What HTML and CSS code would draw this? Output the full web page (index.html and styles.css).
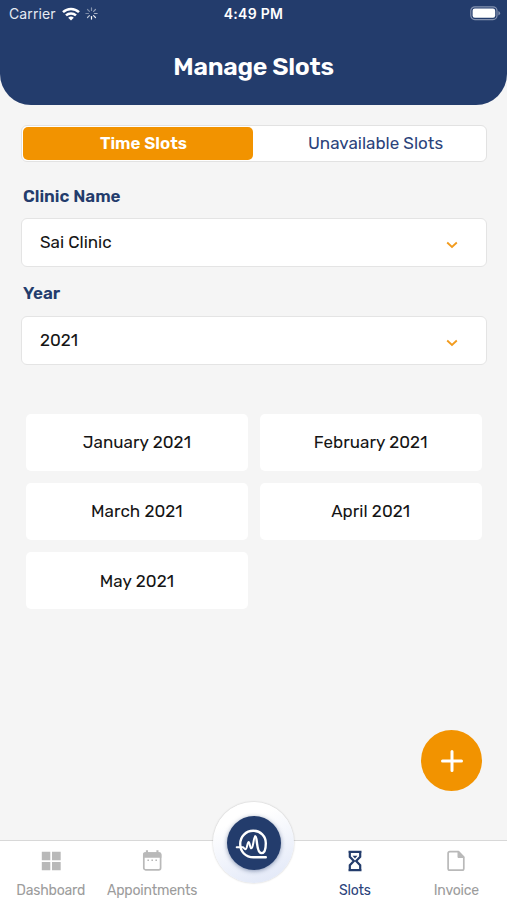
FILE: index.html
```html
<!DOCTYPE html>
<html lang="en">
	<head>
		<meta charset="utf-8">
		<meta name="viewport" content="width=device-width, initial-scale=1">
		<title>Manage Slots</title>
		<link rel="stylesheet" href="styles.css">
	</head>
	<body>
		<header class="header">
			<div class="status">
				<div class="status-left">
					<span class="carrier">Carrier</span>
					<svg class="wifi" width="18" height="14" viewBox="0 0 18 14" fill="none" stroke="#fff" stroke-width="2.5">
						<path d="M1 5.1a11.6 11.6 0 0 1 16 0"/>
						<path d="M4 8.4a7.3 7.3 0 0 1 10 0"/>
						<path d="M9 13.6 6.2 10.7a4.1 4.1 0 0 1 5.6 0z" fill="#fff" stroke="none"/>
					</svg>
					<svg class="spinner" width="13" height="13" viewBox="-6.5 -6.5 13 13" stroke="#fff" stroke-width="1.2" stroke-linecap="round">
						<path d="M0-3V-5.6" opacity=".45"/>
						<path d="M2.1-2.1 4-4" opacity=".5"/>
						<path d="M3 0H5.6" opacity=".6"/>
						<path d="M2.1 2.1 4 4" opacity=".9"/>
						<path d="M0 3V5.6"/>
						<path d="M-2.1 2.1-4 4" opacity=".7"/>
						<path d="M-3 0H-5.6" opacity=".4"/>
						<path d="M-2.1-2.1-4-4" opacity=".4"/>
					</svg>
				</div>
				<div class="clock">4:49 PM</div>
				<div class="status-right">
					<svg width="31" height="15" viewBox="0 0 31 15">
						<rect x=".8" y=".8" width="26.2" height="12.8" rx="4" fill="none" stroke="#8492b0" stroke-width="1.2"/>
						<rect x="2.6" y="2.6" width="22.6" height="9.2" rx="2.2" fill="#fff"/>
						<path d="M28.4 5v4.4q1.7-.7 1.7-2.2T28.4 5z" fill="#8492b0"/>
					</svg>
				</div>
			</div>
			<h1>Manage Slots</h1>
		</header>

		<main>
			<div class="switch">
				<div class="switch-item active"><span>Time Slots</span></div>
				<div class="switch-item"><span>Unavailable Slots</span></div>
			</div>

			<div class="label label-clinic">Clinic Name</div>
			<div class="select">
				<span>Sai Clinic</span>
				<svg width="12" height="8" viewBox="0 0 12 8" fill="none" stroke="#f29b1d" stroke-width="1.8"><path d="M1.2 1.5 6 6l4.8-4.5"/></svg>
			</div>

			<div class="label label-year">Year</div>
			<div class="select">
				<span>2021</span>
				<svg width="12" height="8" viewBox="0 0 12 8" fill="none" stroke="#f29b1d" stroke-width="1.8"><path d="M1.2 1.5 6 6l4.8-4.5"/></svg>
			</div>

			<div class="months">
				<div class="month">January 2021</div>
				<div class="month">February 2021</div>
				<div class="month">March 2021</div>
				<div class="month">April 2021</div>
				<div class="month">May 2021</div>
			</div>
		</main>

		<div class="fab">
			<svg width="22" height="22" viewBox="0 0 22 22" stroke="#fff" stroke-width="3" stroke-linecap="round"><path d="M11 1.5v19M1.5 11h19"/></svg>
		</div>

		<nav class="tabbar">
			<div class="tab">
				<svg width="24" height="24" viewBox="0 0 24 24" fill="#b9b9b9"><path d="M2.8 2.8h8.5v8.4H2.8zM13 2.8h8.7v8.4H13zM2.8 12.9h8.5v8.3H2.8zM13 12.9h8.7v8.3H13z"/></svg>
				<span>Dashboard</span>
			</div>
			<div class="tab">
				<svg width="24" height="24" viewBox="0 0 24 24">
					<rect x="3.8" y="4" width="16.8" height="16.8" rx="1.8" fill="none" stroke="#b9b9b9" stroke-width="1.7"/>
					<path d="M3 5.5Q3 3.2 5 3.2h14.4q2 0 2 2.3v3.3H3zM5.9 1.3H8V4H5.9zM16.4 1.3h2.1V4h-2.1z" fill="#b9b9b9"/>
					<path d="M7.4 10.6H9v1.5H7.4zM11.4 10.6H13v1.5h-1.6zM15.4 10.6H17v1.5h-1.6z" fill="#b9b9b9"/>
				</svg>
				<span>Appointments</span>
			</div>
			<div class="tab tab-home">
				<div class="home-ring">
					<div class="home-disc">
						<svg width="34" height="34" viewBox="0 0 34 34" fill="none" stroke="#fff" stroke-linecap="round" stroke-linejoin="round">
							<path d="M28.8 31.3H16.500C8.500 31.300 3.200 25.500 3.200 18 3.200 10.500 9 4.800 16.200 4.800c7.300 0 12.600 5.200 12.600 12.400 0 5.400-1.500 9.900-4.300 9.900-3.300 0-4-5.200-4.500-9.700-.4-3.600-.6-6.900-1.700-6.900" stroke-width="2.4"/>
							<path d="M18.3 10.5C17 10.500 16.800 15 16 18.500c-.5 2.300-.9 3.800-1.800 3.800-1.400 0-1.300-6.300-2.500-6.300-1.400 0-1.500 7.300-3.300 7.300-1.200 0-1.400-2.100-2.600-2.100H-.3" stroke-width="2"/>
						</svg>
					</div>
				</div>
			</div>
			<div class="tab selected">
				<svg width="24" height="24" viewBox="0 0 24 24" fill="none" stroke="#233c6c" stroke-width="2.2">
					<path d="M5.500 2.800h13M5.500 21.200h13M6.800 2.700v5L10.900 12l-4.100 4.300v5M17.200 2.700v5L13.100 12l4.100 4.300v5"/>
					<path d="M9.500 6.800h5L12 9.400z" fill="#233c6c" stroke="none"/>
				</svg>
				<span>Slots</span>
			</div>
			<div class="tab">
				<svg width="24" height="24" viewBox="0 0 24 24" fill="none" stroke="#b9b9b9" stroke-width="1.7" stroke-linejoin="round">
					<path d="M5.8 2.7h8.7l5.3 5.5v11.2q0 1.7-1.7 1.7H5.8q-1.7 0-1.7-1.7v-15q0-1.7 1.7-1.7z"/>
					<path d="M14 2.7v5.8h5.8z" fill="#b9b9b9" stroke-width="1"/>
				</svg>
				<span>Invoice</span>
			</div>
		</nav>
	</body>
</html>
```
FILE: styles.css
```css
* { box-sizing: border-box; }
body {
	margin: 0;
	height: 900px;
	display: flex;
	flex-direction: column;
	position: relative;
	overflow: hidden;
	font-family: Rubik, Roboto, sans-serif;
	color: #151515;
	background: #f5f5f5;
}
svg { display: block; flex: none; overflow: visible; }

.header {
	height: 104.5px;
	color: #fff;
	background: #233c6c;
	border-radius: 0 0 31px 31px;
}
.status {
	display: grid;
	grid-template-columns: 1fr auto 1fr;
	align-items: center;
	height: 27px;
	padding: 0 6px 0 8px;
	font-family: Inter, sans-serif;
	font-size: 14px;
}
.status-left { display: flex; align-items: center; }
.carrier { padding-left: 1px; letter-spacing: 0.1px; color: #e6eaf2; }
.wifi { margin-left: 6px; }
.spinner { margin-left: 5px; }
.clock { font-weight: 600; letter-spacing: 0.3px; margin-right: 2px; }
.status-right { display: flex; justify-content: flex-end; }
h1 {
	margin: 25px 0 0;
	text-align: center;
	font-size: 25px;
	line-height: 30px;
	font-weight: 600;
	letter-spacing: -0.3px;
}

main {
	flex: 1;
	padding: 20px 20px 0 21px;
}
.switch {
	display: flex;
	height: 37px;
	background: #fff;
	border: 1px solid #e2e2e2;
	border-radius: 6px;
}
.switch-item {
	flex: 1;
	display: flex;
	align-items: center;
	justify-content: center;
	margin: 1px;
	border-radius: 5px;
	font-size: 17px;
	color: #2b437b;
}
.switch-item.active {
	font-weight: 600;
	color: #fff;
	background: #f29300;
}
.switch-item span { padding-left: 11px; }

.label {
	padding-left: 2px;
	font-size: 17px;
	line-height: 20px;
	font-weight: 600;
	color: #233c6c;
}
.label-clinic { margin: 24px 0 12px; }
.label-year { margin: 16px 0 13px; }
.select {
	display: flex;
	align-items: center;
	justify-content: space-between;
	height: 49px;
	padding: 0 28px 0 18px;
	font-size: 17px;
	background: #fff;
	border: 1px solid #e4e4e4;
	border-radius: 6px;
}
.select svg { margin-top: 5px; }

.months {
	display: grid;
	grid-template-columns: 1fr 1fr;
	grid-auto-rows: 57.3px;
	gap: 12px;
	margin: 49px 5.5px 0 5px;
}
.month {
	display: flex;
	align-items: center;
	justify-content: center;
	font-size: 17px;
	letter-spacing: 0.05px;
	background: #fff;
	border-radius: 5px;
}

/* floats over the page */
.fab {
	position: absolute;
	right: 25px;
	bottom: 109px;
	display: flex;
	align-items: center;
	justify-content: center;
	width: 61px;
	height: 61px;
	border-radius: 50%;
	background: #f29300;
}

.tabbar {
	display: grid;
	grid-template-columns: repeat(5, 1fr);
	height: 60px;
	background: #fff;
	border-top: 1px solid #d8d8d8;
}
.tab {
	display: flex;
	flex-direction: column;
	align-items: center;
	padding-top: 8px;
	font-size: 14px;
	color: #9c9c9c;
}
.tab span {
	margin-top: 10px;
	line-height: 16px;
	letter-spacing: -0.2px;
	white-space: nowrap;
}
.tab.selected { color: #2b437b; }
.tab-home { padding: 0; }
.home-ring {
	display: flex;
	flex: none;
	align-items: center;
	justify-content: center;
	width: 81px;
	height: 81px;
	margin: -39px 0 0 1px;
	border-radius: 50%;
	background: linear-gradient(160deg, #fff 25%, #dfe6f7);
	box-shadow: 0 0 2px rgba(0, 0, 0, 0.25);
}
.home-disc {
	display: flex;
	align-items: center;
	justify-content: center;
	width: 54px;
	height: 54px;
	margin-top: 1px;
	border-radius: 50%;
	background: #233c6c;
	box-shadow: 0 1px 4px rgba(35, 60, 108, 0.5);
}
```
